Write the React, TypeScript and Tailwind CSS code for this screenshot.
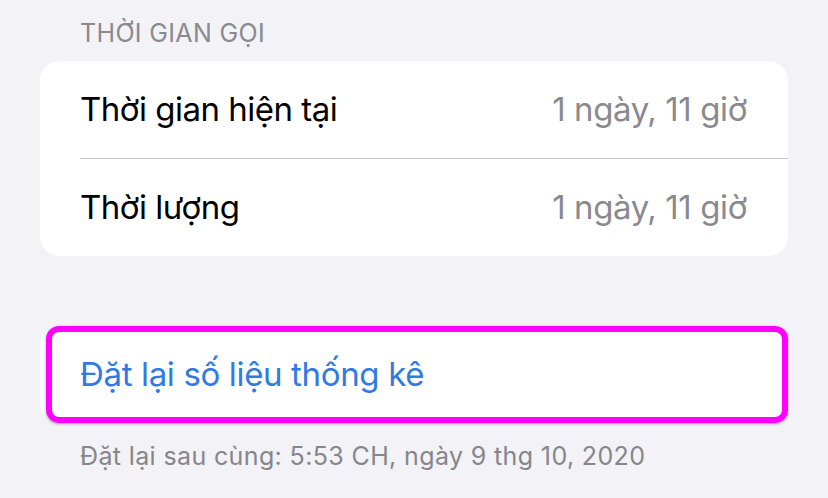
export default function App() {
  const font = { fontFamily: 'Inter, "Noto Sans", sans-serif' };
  return (
    <div
      className="w-[828px] h-[498px] overflow-hidden bg-[#f2f2f7] px-[40px] antialiased"
      style={font}
    >
      <div className="pt-[18px] pl-[40px] text-[25px] leading-[30px] text-[#8a8a8e] tracking-[0.35px]">
        THỜI GIAN GỌI
      </div>
      <div className="mt-[13px] rounded-[20px] bg-white">
        <div className="flex h-[97px] items-center justify-between pl-[40px] pr-[41px]">
          <span className="text-[33px] text-black tracking-[-0.5px]">Thời gian hiện tại</span>
          <span className="text-[33px] text-[#8a8a8e] tracking-[-0.4px]">1 ngày, 11 giờ</span>
        </div>
        <div className="ml-[40px] h-px bg-[#c8c8cc]" />
        <div className="flex h-[97px] items-center justify-between pl-[40px] pr-[41px]">
          <span className="text-[33px] text-black tracking-[-0.5px]">Thời lượng</span>
          <span className="text-[33px] text-[#8a8a8e] tracking-[-0.4px]">1 ngày, 11 giờ</span>
        </div>
      </div>
      <div className="relative mt-[70px] flex h-[97px] items-center rounded-[20px] bg-white pl-[40px]">
        <span className="text-[33px] text-[#2f7ae5] tracking-[-0.35px]">Đặt lại số liệu thống kê</span>
        <div className="absolute top-0 bottom-0 left-[6px] right-0 rounded-[13px] border-[6px] border-[#ff00ff] shadow-[0_1px_3px_rgba(0,0,0,0.35)]" />
      </div>
      <div className="mt-[18px] pl-[40px] text-[25px] leading-[30px] text-[#86868b] tracking-[0.37px]">
        Đặt lại sau cùng: 5:53 CH, ngày 9 thg 10, 2020
      </div>
    </div>
  );
}
